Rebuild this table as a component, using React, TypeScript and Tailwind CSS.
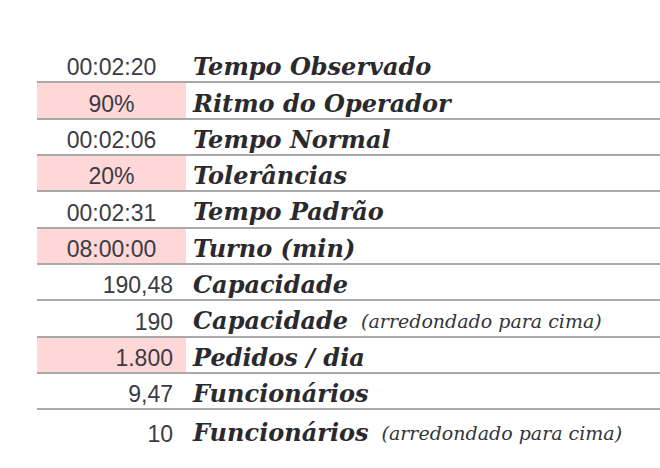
type Row = {
  value: string;
  label: string;
  note?: string;
  align: "center" | "right";
  input?: boolean;
};

const rows: Row[] = [
  { value: "00:02:20", label: "Tempo Observado", align: "center" },
  { value: "90%", label: "Ritmo do Operador", align: "center", input: true },
  { value: "00:02:06", label: "Tempo Normal", align: "center" },
  { value: "20%", label: "Tolerâncias", align: "center", input: true },
  { value: "00:02:31", label: "Tempo Padrão", align: "center" },
  { value: "08:00:00", label: "Turno (min)", align: "center", input: true },
  { value: "190,48", label: "Capacidade", align: "right" },
  { value: "190", label: "Capacidade", note: "(arredondado para cima)", align: "right" },
  { value: "1.800", label: "Pedidos / dia", align: "right", input: true },
  { value: "9,47", label: "Funcionários", align: "right" },
  { value: "10", label: "Funcionários", note: "(arredondado para cima)", align: "right" },
];

export default function App() {
  return (
    <div className="w-[660px] h-[468px] bg-white overflow-hidden pt-[47px] pl-[37px]">
      {rows.map((row, i) => {
        const last = i === rows.length - 1;
        return (
          <div
            key={i}
            className={`flex ${last ? "h-[40px]" : "h-[36.33px] border-b-2 border-[#a9a9a9]"}`}
          >
            {/* value cell */}
            <div
              className={`w-[149px] h-full pt-[7px] flex items-center text-[23px] text-[#3a3b44] ${
                row.align === "center" ? "justify-center" : "justify-end pr-[13px]"
              } ${row.input ? "bg-[#ffd7d7]" : ""}`}
              style={{ fontFamily: '"Liberation Sans", Arial, sans-serif' }}
            >
              {row.value}
            </div>

            {/* label cell */}
            <div
              className="flex-1 h-full pt-[6px] pl-[7px] flex items-center text-[#2a2a2e] whitespace-nowrap"
              style={{ fontFamily: '"DejaVu Serif", serif' }}
            >
              <span className="text-[24px] font-bold italic">{row.label}</span>
              {row.note && (
                <span className="ml-[13px] text-[19px] italic text-[#33343c]">{row.note}</span>
              )}
            </div>
          </div>
        );
      })}
    </div>
  );
}
